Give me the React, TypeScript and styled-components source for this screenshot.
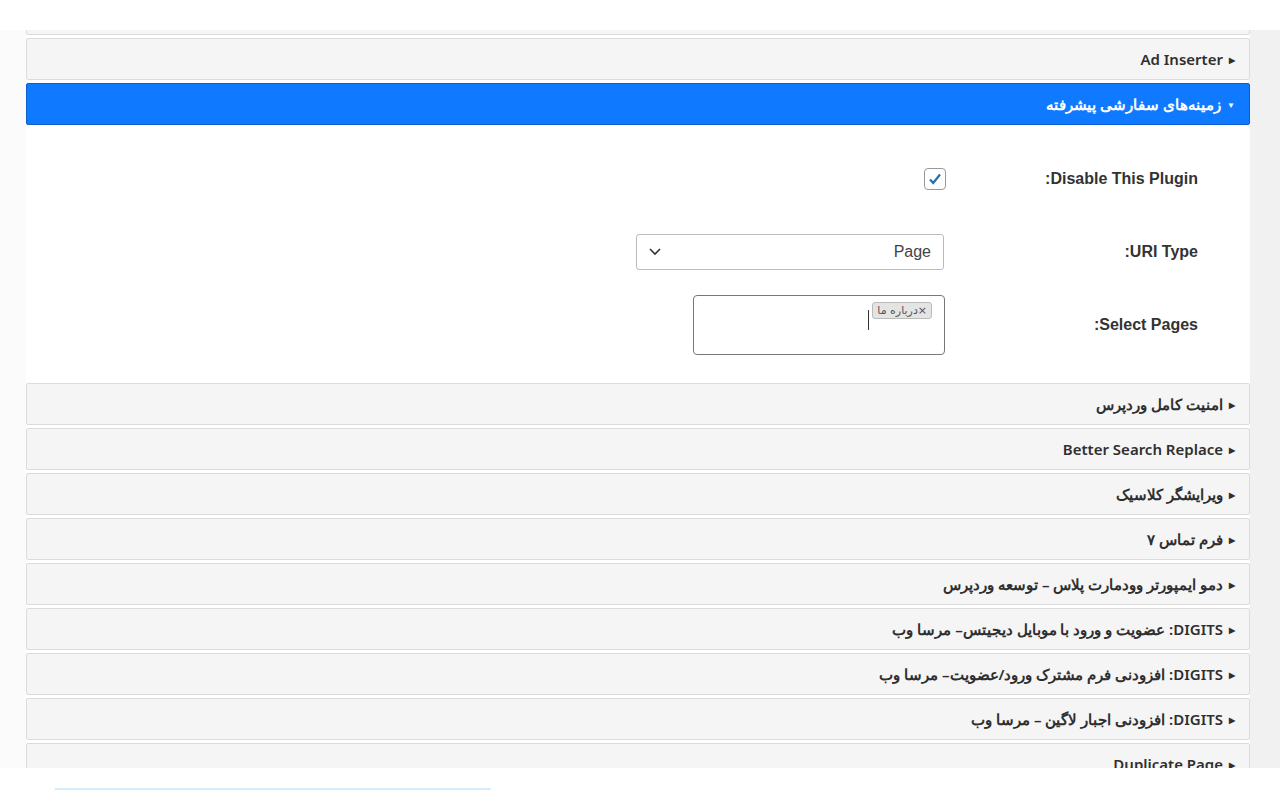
import React from "react";
import styled, { createGlobalStyle } from "styled-components";

const G = createGlobalStyle`
  html,body{margin:0;padding:0;background:#fff;}
  body{font-family:"Noto Sans","Open Sans",sans-serif;overflow:hidden;}
`;
const Page = styled.div`height:791px;display:flex;flex-direction:column;`;
const TopBar = styled.div`height:30px;background:#fff;flex:none;`;
const Body = styled.div`height:738px;background:linear-gradient(to right,#fbfbfb 26px,#fff 26px,#fff 1250px,#f1f1f1 1250px);overflow:hidden;flex:none;`;
const List = styled.div`width:1224px;margin-left:26px;display:flex;flex-direction:column;gap:3px;direction:rtl;margin-top:-37px;`;
const Row = styled.div<{ $open?: boolean }>`
  height:42px;flex:none;box-sizing:border-box;
  background:${p => (p.$open ? "#0f7aff" : "#f5f5f5")};
  border:1px solid ${p => (p.$open ? "#0a5ed0" : "#dcdcdc")};
  border-radius:2px;display:flex;align-items:center;padding:0 14px;gap:6px;
  color:${p => (p.$open ? "#fff" : "#2f2f2f")};font-size:15px;font-weight:600;
`;
const Arrow = styled.span`font-size:8px;`;
const Content = styled.div`background:#fff;padding:19px 52px 20px 0;display:flex;flex-direction:column;margin-top:-3px;`;
const Field = styled.div<{ $h: number }>`height:${p => p.$h}px;display:flex;align-items:center;`;
const Label = styled.div`width:250px;font-family:"Liberation Sans",Arial,sans-serif;font-weight:700;font-size:16px;color:#333;text-align:right;flex:none;`;
const Ctrl = styled.div<{ $m: number }>`flex:none;margin-right:${p => p.$m}px;`;
const Check = styled.div`width:20px;height:20px;border:1px solid #999;border-radius:4px;display:flex;align-items:center;justify-content:center;`;
const Select = styled.div`width:308px;height:36px;box-sizing:border-box;border:1px solid #bbb;border-radius:3px;display:flex;align-items:center;justify-content:space-between;padding:0 12px;font-family:"Liberation Sans",Arial,sans-serif;font-size:16px;color:#444;`;
const Multi = styled.div`width:252px;height:60px;box-sizing:border-box;border:1px solid #777;border-radius:4px;padding:6px 12px;display:flex;gap:3px;align-items:flex-start;`;
const Tag = styled.span`background:#e4e4e4;border:1px solid #bbb;border-radius:3px;font-family:"DejaVu Sans",sans-serif;font-size:11px;color:#555;padding:1px 4px;`;
const Caret = styled.span`width:1px;height:20px;background:#333;margin-top:8px;`;
const Footer = styled.div`flex:1;background:#fff;position:relative;`;
const Line = styled.div`position:absolute;left:55px;top:20px;width:436px;height:2px;background:#d6eefb;`;

const items: React.ReactNode[] = [
  "امنیت کامل وردپرس", "Better Search Replace", "ویرایشگر کلاسیک", "فرم تماس ۷",
  "دمو ایمپورتر وودمارت پلاس – توسعه وردپرس", "DIGITS: عضویت و ورود با موبایل دیجیتس– مرسا وب",
  "DIGITS: افزودنی فرم مشترک ورود/عضویت– مرسا وب", "DIGITS: افزودنی اجبار لاگین – مرسا وب", "Duplicate Page",
];

export default function App() {
  return (
    <Page>
      <G />
      <TopBar />
      <Body>
        <List>
          <Row />
          <Row><Arrow>▶</Arrow>Ad Inserter</Row>
          <Row $open><Arrow>▼</Arrow>زمینه‌های سفارشی پیشرفته</Row>
          <Content>
            <Field $h={70}><Label>Disable This Plugin:</Label><Ctrl $m={2}>
              <Check><svg width="14" height="14" viewBox="0 0 14 14"><path d="M2 7.5l3.2 3.5L12 2.5" fill="none" stroke="#2271b1" strokeWidth="2.2"/></svg></Check>
            </Ctrl></Field>
            <Field $h={76}><Label>URI Type:</Label><Ctrl $m={4}>
              <Select><span>Page</span><svg width="12" height="8" viewBox="0 0 12 8"><path d="M1 1l5 5 5-5" fill="none" stroke="#333" strokeWidth="1.6"/></svg></Select>
            </Ctrl></Field>
            <Field $h={70}><Label>Select Pages:</Label><Ctrl $m={3}>
              <Multi><Tag>×درباره ما</Tag><Caret /></Multi>
            </Ctrl></Field>
          </Content>
          {items.map((t, i) => <Row key={i}><Arrow>▶</Arrow>{t}</Row>)}
        </List>
      </Body>
      <Footer><Line /></Footer>
    </Page>
  );
}
